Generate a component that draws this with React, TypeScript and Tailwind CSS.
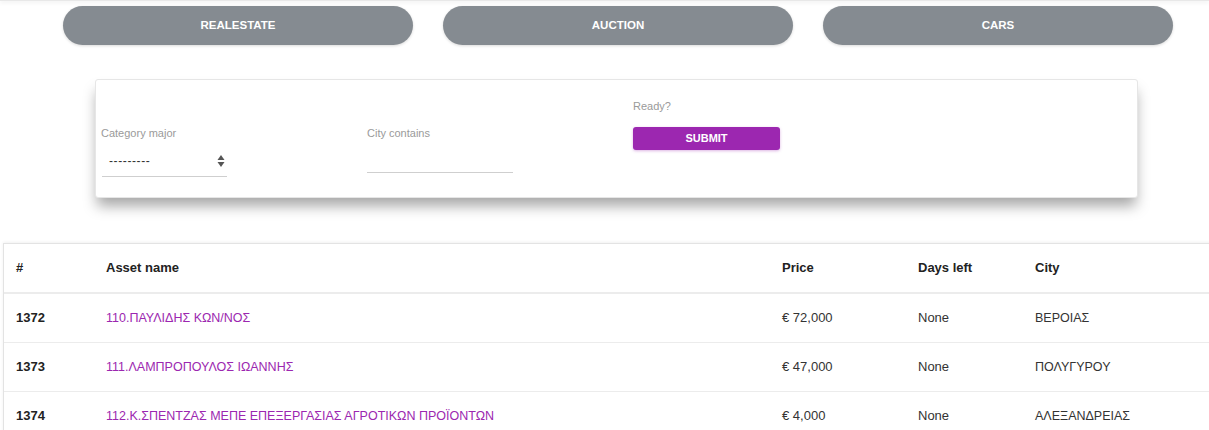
const tabs = ["REALESTATE", "AUCTION", "CARS"];

const rows = [
  { id: 1372, name: "110.ΠΑΥΛΙΔΗΣ ΚΩΝ/ΝΟΣ", price: "€ 72,000", days: "None", city: "ΒΕΡΟΙΑΣ" },
  { id: 1373, name: "111.ΛΑΜΠΡΟΠΟΥΛΟΣ ΙΩΑΝΝΗΣ", price: "€ 47,000", days: "None", city: "ΠΟΛΥΓΥΡΟΥ" },
  { id: 1374, name: "112.Κ.ΣΠΕΝΤΖΑΣ ΜΕΠΕ ΕΠΕΞΕΡΓΑΣΙΑΣ ΑΓΡΟΤΙΚΩΝ ΠΡΟΪΟΝΤΩΝ", price: "€ 4,000", days: "None", city: "ΑΛΕΞΑΝΔΡΕΙΑΣ" },
];

export default function App() {
  return (
    <div className="w-full min-h-[430px] overflow-hidden bg-white font-['Liberation_Sans',Arial,sans-serif] text-[#222]">
      <div className="h-px bg-[#e8e8e8] shadow-[0_1px_4px_rgba(0,0,0,0.18)]" />

      <div className="flex gap-[30px] pl-[63px] pt-[5px]">
        {tabs.map((t) => (
          <button
            key={t}
            className="w-[350px] h-[39px] rounded-full bg-[#858b91] text-white text-[11.5px] font-bold shadow-[0_1px_3px_rgba(0,0,0,0.15)]"
          >
            {t}
          </button>
        ))}
      </div>

      <div className="ml-[95px] mt-[34px] w-[1043px] h-[119px] bg-white rounded-[3px] border border-[#e6e6e6] shadow-[0_10px_14px_-2px_rgba(0,0,0,0.35)] flex items-start pl-[5px]">
        <div className="w-[266px] pt-[46px] flex flex-col">
          <label className="text-[11px] text-[#9a9a9a] leading-[14px]">Category major</label>
          <div className="mt-[9px] ml-[1px] w-[125px] h-[28px] border-b border-[#cfcfcf] flex items-center justify-between pl-[7px] pr-[2px]">
            <span className="text-[12px] text-[#333] tracking-[0.6px] -mt-[3px]">---------</span>
            <svg width="8" height="12" viewBox="0 0 8 12" className="-mt-[3px]">
              <path d="M4 0 L7.5 5 L0.5 5 Z" fill="#555" />
              <path d="M4 12 L7.5 7 L0.5 7 Z" fill="#555" />
            </svg>
          </div>
        </div>
        <div className="w-[266px] pt-[46px] flex flex-col">
          <label className="text-[11px] text-[#9a9a9a] leading-[14px]">City contains</label>
          <div className="mt-[19px] w-[146px] h-[14px] border-b border-[#cfcfcf]" />
        </div>
        <div className="w-[266px] pt-[19px] flex flex-col">
          <span className="text-[11px] text-[#9a9a9a] leading-[14px]">Ready?</span>
          <button className="mt-[14px] w-[147px] h-[23px] rounded-[3px] bg-[#9c27b0] text-white text-[11px] font-bold shadow-[0_1px_3px_rgba(156,39,176,0.35)]">
            SUBMIT
          </button>
        </div>
      </div>

      <div className="ml-[3px] mt-[45px] w-[1240px] border-t border-l border-[#e3e3e3] shadow-[0_-1px_3px_rgba(0,0,0,0.06)]">
        <div className="flex h-[50px] items-center text-[13px] font-bold text-[#222] border-b-2 border-[#ececec]">
          <div className="w-[89px] pl-[12px]">#</div>
          <div className="w-[676px] pl-[13px]">Asset name</div>
          <div className="w-[136px] pl-[13px]">Price</div>
          <div className="w-[117px] pl-[13px]">Days left</div>
          <div className="flex-1 pl-[13px]">City</div>
        </div>
        {rows.map((r) => (
          <div key={r.id} className="flex h-[49px] items-center text-[13px] border-b border-[#ececec]">
            <div className="w-[89px] pl-[12px] font-bold text-[#222]">{r.id}</div>
            <div className="w-[676px] pl-[13px] text-[12.5px] text-[#9c27b0]">{r.name}</div>
            <div className="w-[136px] pl-[13px] text-[#333]">{r.price}</div>
            <div className="w-[117px] pl-[13px] text-[#333]">{r.days}</div>
            <div className="flex-1 pl-[13px] text-[12.5px] text-[#333]">{r.city}</div>
          </div>
        ))}
      </div>
    </div>
  );
}
